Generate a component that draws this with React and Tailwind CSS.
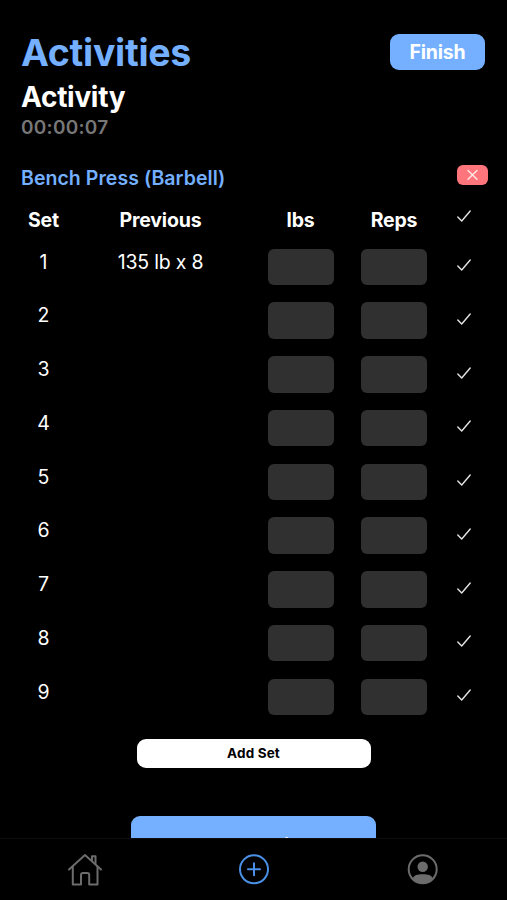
import { useState } from "react";

const CheckIcon = () => (
  <svg
    viewBox="0 0 16 14"
    className="block w-4 h-3.5"
    fill="none"
    stroke="#e4e4e4"
    strokeWidth="1.4"
    strokeLinecap="round"
    strokeLinejoin="round"
  >
    <path d="M1.8 8 5.7 12 14.2 2" />
  </svg>
);

const CloseIcon = () => (
  <svg
    viewBox="0 0 12 12"
    className="block w-3 h-3"
    fill="none"
    stroke="#ffe9e6"
    strokeWidth="1.4"
    strokeLinecap="round"
  >
    <path d="M1 1.4 10 10.2M10 1.4 1 10.2" />
  </svg>
);

const HomeIcon = () => (
  <svg
    viewBox="0 0 36 34"
    className="block w-9 h-[34px]"
    fill="none"
    stroke="#6c6c6c"
    strokeWidth="2"
    strokeLinecap="round"
    strokeLinejoin="round"
  >
    <path d="M2 16.5 18 2 34 16.5" />
    <path d="M5.8 13.5V31.5H14V22Q14 20 16 20H20.2Q22.2 20 22.2 22V31.5H30.5V13.5" />
    <path d="M25 7.5V3.3H28.5V11" />
  </svg>
);

const PlusIcon = () => (
  <svg
    viewBox="0 0 32 32"
    className="block w-8 h-8"
    fill="none"
    stroke="#4a90e6"
    strokeWidth="2"
    strokeLinecap="round"
  >
    <circle cx="16" cy="16.3" r="14" />
    <path d="M16 10.3V22.3M10 16.3H22" />
  </svg>
);

const ProfileIcon = () => (
  <svg viewBox="0 0 32 32" className="block w-8 h-8">
    <circle cx="15.7" cy="16.3" r="14" fill="none" stroke="#6c6c6c" strokeWidth="2" />
    <circle cx="15.7" cy="13.7" r="5.2" fill="#6c6c6c" />
    <path
      d="M5.7 25C7.5 22.3 10 21.3 15.7 21.3S24 22.3 25.7 25C23.5 28.5 20 30.3 15.7 30.3S8 28.5 5.7 25Z"
      fill="#6c6c6c"
    />
  </svg>
);

const initialSets = [
  { id: 1, previous: "135 lb x 8" },
  { id: 2, previous: "" },
  { id: 3, previous: "" },
  { id: 4, previous: "" },
  { id: 5, previous: "" },
  { id: 6, previous: "" },
  { id: 7, previous: "" },
  { id: 8, previous: "" },
  { id: 9, previous: "" },
];

const App = () => {
  const [sets, setSets] = useState(initialSets);

  const handleAddSet = () => {
    setSets([...sets, { id: sets.length + 1, previous: "" }]);
  };

  return (
    <div className="flex flex-col h-screen bg-black text-white overflow-hidden font-['Inter',sans-serif]">
      <main className="flex-1 min-h-0 overflow-hidden">
        {/* Header */}
        <header className="flex justify-between items-start pl-[21px] pr-[22px] pt-[33px]">
          <div>
            <h1 className="text-[37.5px] leading-10 font-bold tracking-[-0.3px] text-[#74b0ff]">
              Activities
            </h1>
            <h2 className="mt-1 text-[28px] leading-10 font-bold tracking-[-0.3px]">
              Activity
            </h2>
            <p className="pt-px text-[19px] leading-5 font-semibold tracking-[0.25px] text-[#777777]">
              00:00:07
            </p>
          </div>
          <button className="w-[95px] h-9 mt-px pt-0.5 rounded-[9px] bg-[#74b0ff] text-[19.5px] font-bold tracking-[-0.2px]">
            Finish
          </button>
        </header>

        {/* Exercise title */}
        <div className="flex justify-between items-start mt-[27px] pl-[21px] pr-[19px]">
          <h3 className="pt-px text-[19.5px] leading-6 font-semibold tracking-[0.05px] text-[#74b0ff]">
            Bench Press (Barbell)
          </h3>
          <button className="flex items-center justify-center w-[31px] h-5 rounded-md bg-[#ff757c]">
            <CloseIcon />
          </button>
        </div>

        {/* Sets */}
        <div className="grid grid-cols-[87px_147px_133px_54px_86px] mt-[18px] h-[38px] text-[19.5px] leading-6 font-bold tracking-[-0.2px] text-center">
          <span>Set</span>
          <span>Previous</span>
          <span>lbs</span>
          <span>Reps</span>
          <span className="flex justify-center pt-px">
            <CheckIcon />
          </span>
        </div>
        {sets.map((set) => (
          <div
            key={set.id}
            className="grid grid-cols-[87px_147px_133px_54px_86px] h-[53.75px] pt-[2.5px] text-[19.5px] leading-6 text-center"
          >
            <span className="pt-px">{set.id}</span>
            <span className="pt-px tracking-[-0.2px]">{set.previous}</span>
            <input className="justify-self-center w-[66px] h-[36.5px] rounded-md bg-[#303030] text-center" />
            <input className="justify-self-center w-[66px] h-[36.5px] rounded-md bg-[#303030] text-center" />
            <span className="flex justify-center pt-[9.5px]">
              <CheckIcon />
            </span>
          </div>
        ))}

        <button
          onClick={handleAddSet}
          className="block w-[234px] h-[29px] mx-auto mt-[9px] rounded-[9px] bg-white text-[13.5px] font-bold tracking-[0.15px] text-black"
        >
          Add Set
        </button>
        <button className="block w-[245px] h-[59px] mx-auto mt-12 rounded-[9px] bg-[#74b0ff] text-[17.5px] font-semibold">
          Add Exercise
        </button>
      </main>

      {/* Tab bar */}
      <nav className="grid grid-cols-3 shrink-0 h-[62px] border-t border-[#0e0e0e] justify-items-center pt-3.5">
        <HomeIcon />
        <PlusIcon />
        <ProfileIcon />
      </nav>
    </div>
  );
};

export default App;
